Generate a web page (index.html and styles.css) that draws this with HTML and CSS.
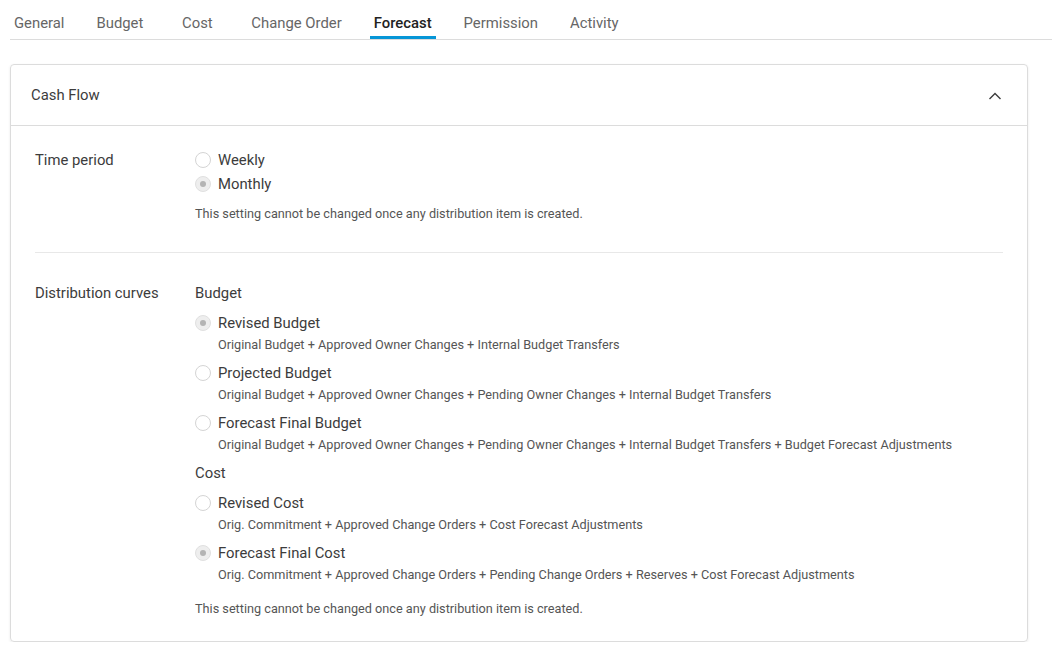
FILE: index.html
```html
<!DOCTYPE html>
<html>
<head>
<meta charset="utf-8">
<link rel="stylesheet" href="styles.css">
</head>
<body>
<nav class="tabs">
  <a class="tab">General</a>
  <a class="tab">Budget</a>
  <a class="tab">Cost</a>
  <a class="tab">Change Order</a>
  <a class="tab active">Forecast</a>
  <a class="tab">Permission</a>
  <a class="tab">Activity</a>
</nav>

<section class="card">
  <header class="card-header">
    <span class="card-title">Cash Flow</span>
    <svg class="chevron" width="14" height="14" viewBox="0 0 14 14"><path d="M1.5 10 L7 4.5 L12.5 10" fill="none" stroke="#3c3c3c" stroke-width="1.4"/></svg>
  </header>
  <div class="card-body">
    <div class="setting">
      <div class="label">Time period</div>
      <div class="control">
        <div class="radio-row"><span class="radio"></span><span>Weekly</span></div>
        <div class="radio-row"><span class="radio checked"></span><span>Monthly</span></div>
        <p class="hint">This setting cannot be changed once any distribution item is created.</p>
      </div>
    </div>
    <hr class="divider">
    <div class="setting">
      <div class="label">Distribution curves</div>
      <div class="control">
        <div class="group-title">Budget</div>
        <div class="option">
          <div class="radio-row"><span class="radio checked"></span><span>Revised Budget</span></div>
          <div class="desc">Original Budget + Approved Owner Changes + Internal Budget Transfers</div>
        </div>
        <div class="option">
          <div class="radio-row"><span class="radio"></span><span>Projected Budget</span></div>
          <div class="desc">Original Budget + Approved Owner Changes + Pending Owner Changes + Internal Budget Transfers</div>
        </div>
        <div class="option">
          <div class="radio-row"><span class="radio"></span><span>Forecast Final Budget</span></div>
          <div class="desc">Original Budget + Approved Owner Changes + Pending Owner Changes + Internal Budget Transfers + Budget Forecast Adjustments</div>
        </div>
        <div class="group-title">Cost</div>
        <div class="option">
          <div class="radio-row"><span class="radio"></span><span>Revised Cost</span></div>
          <div class="desc">Orig. Commitment + Approved Change Orders + Cost Forecast Adjustments</div>
        </div>
        <div class="option">
          <div class="radio-row"><span class="radio checked"></span><span>Forecast Final Cost</span></div>
          <div class="desc">Orig. Commitment + Approved Change Orders + Pending Change Orders + Reserves + Cost Forecast Adjustments</div>
        </div>
        <p class="hint hint-bottom">This setting cannot be changed once any distribution item is created.</p>
      </div>
    </div>
  </div>
</section>
</body>
</html>
```

FILE: styles.css
```css
* { box-sizing: border-box; }
body {
  margin: 0;
  font-family: Roboto, "Noto Sans", sans-serif;
  color: #3c3c3c;
  background: #fff;
}
.tabs {
  display: flex;
  gap: 24px;
  margin-left: 10px;
  height: 40px;
  border-bottom: 1px solid #dcdcdc;
}
.tab {
  padding: 0 4px;
  min-width: 52px;
  text-align: center;
  height: 39px;
  line-height: 46px;
  font-size: 14.85px;
  color: #666;
  border-bottom: 3px solid transparent;
  margin-bottom: -1px;
}
.tab.active {
  color: #222;
  font-weight: 500;
  border-bottom-color: #0696d7;
}
.card {
  margin: 24px 24px 0 10px;
  border: 1px solid #dcdcdc;
  border-radius: 4px;
  box-shadow: 0 1px 3px rgba(0,0,0,0.08);
}
.card-header {
  height: 61px;
  display: flex;
  align-items: center;
  justify-content: space-between;
  padding: 0 25px 0 20px;
  border-bottom: 1px solid #dcdcdc;
}
.card-title { font-size: 14.85px; }
.chevron { display: block; margin-top: 2px; }
.card-body {
  padding: 22px 24px 23px 24px;
}
.setting {
  display: flex;
}
.label {
  width: 160px;
  flex: none;
  font-size: 14.85px;
  line-height: 24px;
}
.control { flex: 1; }
.radio-row {
  display: flex;
  align-items: center;
  font-size: 14.85px;
  line-height: 24px;
}
.radio {
  width: 16px;
  height: 16px;
  border: 1px solid #d4d4d4;
  border-radius: 50%;
  margin-right: 7px;
  background: #fff;
  display: flex;
  align-items: center;
  justify-content: center;
  flex: none;
}
.radio.checked {
  background: #eeeeee;
  border-color: #e0e0e0;
}
.radio.checked::after {
  content: "";
  width: 6px;
  height: 6px;
  border-radius: 50%;
  background: #b4b4b4;
}
.hint {
  margin: 9px 0 0;
  font-size: 12.7px;
  line-height: 18px;
  color: #555;
}
.hint-bottom { margin-top: 17px; }
.divider {
  border: 0;
  border-top: 1px solid #e8e8e8;
  margin: 29px 0 28px;
}
.group-title {
  font-size: 14.85px;
  line-height: 24px;
  margin-bottom: 6px;
}
.option { margin-bottom: 8px; }
.desc {
  padding-left: 23px;
  font-size: 12.7px;
  line-height: 20px;
  margin-bottom: -2px;
  color: #555;
}
```
